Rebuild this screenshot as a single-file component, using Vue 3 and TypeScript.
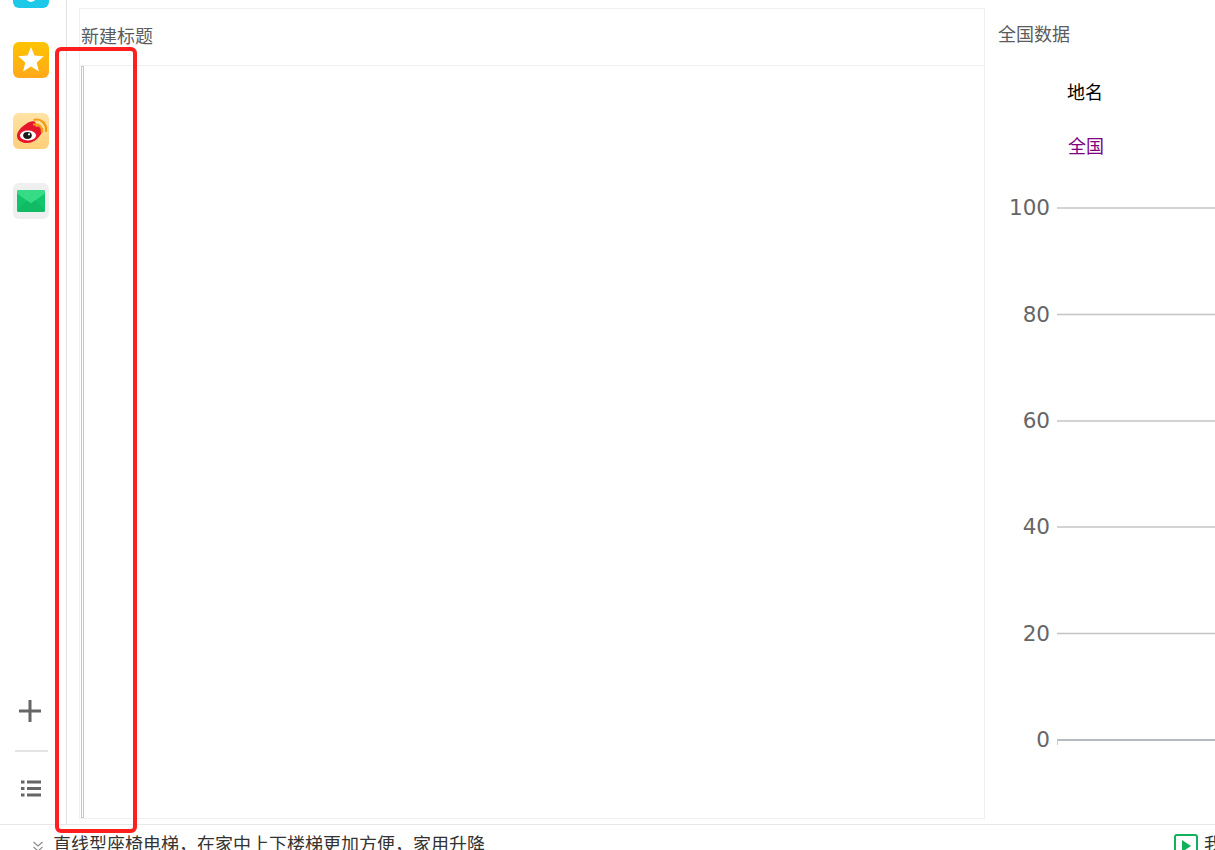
<script setup lang="ts">
const ticks = [
  { label: '100', y: 208 },
  { label: '80', y: 314.5 },
  { label: '60', y: 421 },
  { label: '40', y: 527 },
  { label: '20', y: 633.5 },
  { label: '0', y: 740 },
]
const svgTop = 170
</script>

<template>
  <div class="page">
    <div class="top">
      <aside class="side">
        <div class="apps">
          <div class="app cyan">
            <svg width="36" height="36" viewBox="0 0 36 36"><circle cx="18" cy="25" r="5" fill="#fff" /></svg>
          </div>
          <div class="app star">
            <svg width="36" height="36" viewBox="0 0 36 36"><path d="M18 5L21.500 13.600L30.800 14.300L23.700 20.400L25.900 29.400L18 24.500L10.100 29.400L12.300 20.400L5.200 14.300L14.500 13.600Z" fill="#fff" /></svg>
          </div>
          <div class="app weibo">
            <svg width="36" height="36" viewBox="0 0 36 36">
              <path d="M13 11c4.500-3.500 9-3.500 9.800-.8.400 1.500-.3 3 0 3.300.4.300 2-.5 3.800-.2 2.700.5 3.400 2.500 2.700 4.700-1 4.500-7.300 12-15 12-6.300 0-10.300-3-10.300-7.300 0-3.700 4-8.700 9-11.700z" fill="#e6162d" />
              <ellipse cx="15" cy="22.500" rx="8" ry="5" fill="#fff" />
              <ellipse cx="14.500" cy="22.500" rx="4.300" ry="3.400" fill="#1c1c1c" />
              <circle cx="16" cy="21.300" r="1.100" fill="#fff" />
              <path d="M21 11.500c4.500-1 8.500 2.500 8 7.500" fill="none" stroke="#f39a12" stroke-width="2.200" stroke-linecap="round" />
              <path d="M21.500 6.800c6.500-1.500 12.500 4 11.500 11.200" fill="none" stroke="#f39a12" stroke-width="2.200" stroke-linecap="round" />
            </svg>
          </div>
          <div class="app mail">
            <svg width="36" height="36" viewBox="0 0 36 36">
              <rect x="4" y="7" width="28" height="22" rx="2" fill="#12c46b" />
              <path d="M4 9q0-2 2-2h24q2 0 2 2v1.500L18 20.500 4 10.500z" fill="#35dc85" />
              <path d="M4 27l10-9.500 4 3 4-3L32 27q0 2-2 2H6q-2 0-2-2z" fill="#10bb64" />
            </svg>
          </div>
        </div>
        <div class="tools">
          <svg class="plus" width="22" height="22" viewBox="0 0 22 22"><path d="M11 0v22M0 11h22" stroke="#666" stroke-width="3" fill="none" /></svg>
          <div class="rule"></div>
          <svg class="list" width="20" height="17" viewBox="0 0 20 17">
            <path d="M0 2h3.500M6 2h14M0 8.500h3.500M6 8.500h14M0 15h3.500M6 15h14" stroke="#666" stroke-width="3" fill="none" />
          </svg>
        </div>
      </aside>

      <main class="main">
        <section class="panel">
          <header class="panel-head">新建标题</header>
          <div class="panel-body">
            <div class="sliver"></div>
          </div>
        </section>

        <section class="data">
          <h2 class="data-title">全国数据</h2>
          <div class="data-table">
            <div class="th">地名</div>
            <div class="td">全国</div>
          </div>
          <svg class="chart" width="230" height="600" viewBox="0 0 230 600">
            <g v-for="t in ticks" :key="t.label">
              <text class="tick" x="65" :y="t.y - svgTop + 7" text-anchor="end">{{ t.label }}</text>
              <line x1="72" x2="230" :y1="t.y - svgTop" :y2="t.y - svgTop" stroke="#c4c4c4" stroke-width="1.300" />
            </g>
            <line x1="72" x2="230" y1="570" y2="570" stroke="#adb3b8" stroke-width="1.500" />
            <line x1="72.500" x2="72.500" y1="570" y2="575" stroke="#ccc" stroke-width="1" />
          </svg>
        </section>
      </main>
    </div>

    <footer class="foot">
      <svg class="chev" width="12" height="12" viewBox="0 0 12 12">
        <path d="M1.500 2l4.500 4 4.500-4M1.500 7l4.500 4 4.500-4" fill="none" stroke="#888" stroke-width="1.100" />
      </svg>
      <span class="foot-text">直线型座椅电梯，在家中上下楼梯更加方便，家用升降</span>
      <span class="foot-right">
        <span class="play">
          <svg width="9" height="12" viewBox="0 0 9 12"><path d="M0 0l9 6-9 6z" fill="#12b15c" /></svg>
        </span>
        <span class="foot-word">我</span>
      </span>
    </footer>

    <div class="marker"></div>
  </div>
</template>

<style>
html, body {
  margin: 0;
  overflow: hidden;
  background: #fff;
}
</style>

<style scoped>
.page {
  position: relative;
  width: 1215px;
  height: 850px;
  overflow: hidden;
  background: #fff;
  font-family: "Liberation Serif", "Noto Sans CJK SC", serif;
  font-size: 18px;
}
.top {
  display: flex;
  height: 824px;
  border-bottom: 1px solid #e8e8e8;
  box-sizing: content-box;
}
.side {
  width: 66px;
  flex: none;
  border-right: 1px solid #e2e2e2;
  display: flex;
  flex-direction: column;
  justify-content: space-between;
  box-sizing: content-box;
}
.apps {
  display: flex;
  flex-direction: column;
  gap: 34.500px;
  padding-left: 13px;
  margin-top: -28.200px;
}
.app {
  width: 36px;
  height: 36px;
  border-radius: 6px;
  overflow: hidden;
}
.app svg { display: block; }
.cyan { background: #1ec8e8; }
.star { background: linear-gradient(#ffc400, #ffa91a); }
.weibo { background: linear-gradient(#ffe3a6, #ffcf78); }
.mail { background: #efefef; }
.tools {
  display: flex;
  flex-direction: column;
  align-items: flex-start;
  padding-bottom: 27px;
}
.plus { margin: 0 0 28px 19px; }
.rule {
  width: 33px;
  height: 2px;
  background: #e4e4e4;
  margin: 0 0 28px 15px;
}
.list { margin-left: 21px; }
.main {
  flex: 1;
  display: flex;
  min-width: 0;
  padding: 8px 0 5px 12px;
}
.panel {
  width: 906px;
  flex: none;
  box-sizing: border-box;
  border: 1px solid #f0f0f0;
  display: flex;
  flex-direction: column;
}
.panel-head {
  height: 57px;
  flex: none;
  box-sizing: border-box;
  border-bottom: 1px solid #f0f0f0;
  padding: 16px 0 0 1px;
  color: #5c5c5c;
  line-height: 24px;
}
.panel-body {
  flex: 1;
  display: flex;
  padding-left: 1px;
  min-height: 0;
}
.sliver {
  width: 1px;
  border: 1px solid #c8c8c8;
  background: #fff;
  box-sizing: content-box;
}
.data {
  flex: 1;
  min-width: 0;
  padding-left: 13px;
}
.data-title {
  margin: 15px 0 0;
  font-size: 18px;
  font-weight: 400;
  line-height: 24px;
  color: #5c5c5c;
}
.data-table {
  padding-left: 69px;
  line-height: 24px;
}
.th {
  margin-top: 34px;
  color: #000;
}
.td {
  margin-top: 30px;
  color: #800080;
  padding-left: 1px;
}
.chart {
  display: block;
  margin: 11px 0 0 -13px;
}
.tick {
  font-family: "DejaVu Sans", sans-serif;
  font-size: 21.500px;
  fill: #666;
}
.foot {
  display: flex;
  align-items: flex-start;
  height: 25px;
  padding-left: 32px;
}
.chev { margin-top: 15px; }
.foot-text {
  margin-left: 9px;
  line-height: 24px;
  margin-top: 8px;
  color: #333;
}
.foot-right {
  margin-left: auto;
  display: flex;
  align-items: flex-start;
  margin-top: 9px;
}
.play {
  width: 24px;
  height: 24px;
  border: 2px solid #12b15c;
  border-radius: 3px;
  box-sizing: border-box;
  display: flex;
  align-items: center;
  justify-content: center;
  margin-right: 6px;
}
.foot-word {
  width: 11px;
  overflow: hidden;
  line-height: 24px;
  margin-top: -1px;
  color: #333;
}
.marker {
  position: absolute;
  left: 55px;
  top: 47px;
  width: 82px;
  height: 786px;
  box-sizing: border-box;
  border: 4px solid #ff1f1f;
  border-radius: 6px;
  pointer-events: none;
}
</style>
